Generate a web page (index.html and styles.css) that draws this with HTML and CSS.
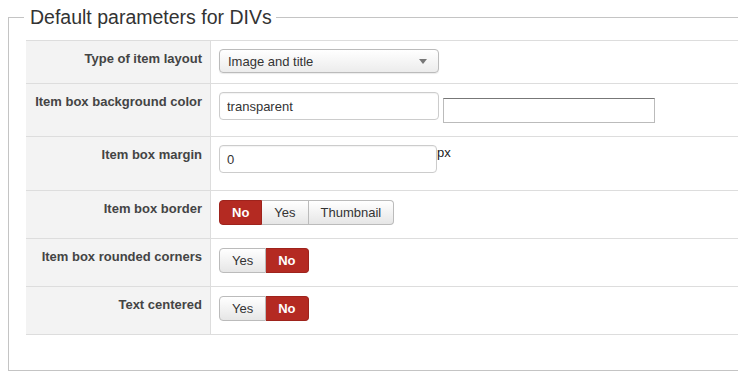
FILE: index.html
```html
<!DOCTYPE html>
<html lang="en">
<head>
    <meta charset="UTF-8">
    <meta name="viewport" content="width=device-width, initial-scale=1.0">
    <title>Default parameters for DIVs</title>
    <link rel="stylesheet" href="styles.css">
</head>
<body>
    <fieldset class="params">
        <legend>Default parameters for DIVs</legend>
        <table class="param-table">
            <!-- layout -->
            <tr class="row-select">
                <th>Type of item layout</th>
                <td>
                    <div class="select">
                        <span>Image and title</span>
                        <span class="caret"></span>
                    </div>
                </td>
            </tr>
            <!-- background -->
            <tr class="row-color">
                <th>Item box background color</th>
                <td>
                    <div class="inline">
                        <input class="text" type="text" value="transparent">
                        <span class="swatch"></span>
                    </div>
                </td>
            </tr>
            <!-- margin -->
            <tr class="row-input">
                <th>Item box margin</th>
                <td>
                    <div class="inline">
                        <input class="text short" type="text" value="0">
                        <span class="unit">px</span>
                    </div>
                </td>
            </tr>
            <!-- border -->
            <tr class="row-btn">
                <th>Item box border</th>
                <td>
                    <div class="btn-group">
                        <span class="btn active">No</span>
                        <span class="btn">Yes</span>
                        <span class="btn">Thumbnail</span>
                    </div>
                </td>
            </tr>
            <tr class="row-btn">
                <th>Item box rounded corners</th>
                <td>
                    <div class="btn-group">
                        <span class="btn">Yes</span>
                        <span class="btn active">No</span>
                    </div>
                </td>
            </tr>
            <tr class="row-btn">
                <th>Text centered</th>
                <td>
                    <div class="btn-group">
                        <span class="btn">Yes</span>
                        <span class="btn active">No</span>
                    </div>
                </td>
            </tr>
        </table>
    </fieldset>
</body>
</html>
```

FILE: styles.css
```css
body {
    margin: 0;
    font-family: "Liberation Sans", Arial, sans-serif;
    font-size: 13px;
    color: #333;
    background-color: #fff;
    overflow: hidden;
}
.params {
    margin: 5px -40px 0 8px;
    padding: 11px 0 35px 17px;
    border: 1px solid #c4c4c4;
    min-width: 0;
}
.params legend {
    margin-left: -2px;
    padding: 0 4px 0 6px;
    font-size: 19.5px;
    line-height: 24px;
    color: #333;
}
.param-table {
    width: 100%;
    border-collapse: collapse;
    border-top: 1px solid #ddd;
}
.param-table tr {
    border-bottom: 1px solid #ddd;
}
.param-table th {
    width: 176px;
    padding: 9px 8px 0 0;
    background-color: #f3f3f3;
    border-right: 1px solid #ddd;
    text-align: right;
    vertical-align: top;
    font-weight: bold;
    color: #444;
    line-height: 18px;
    white-space: nowrap;
}
.param-table td {
    padding: 8px 0 0 8px;
    vertical-align: top;
}
.row-select { height: 43px; }
.row-color { height: 53px; }
.row-input { height: 54px; }
.row-btn { height: 48px; }

.select {
    display: flex;
    align-items: center;
    justify-content: space-between;
    width: 220px;
    height: 24px;
    padding: 0 11px 0 8px;
    box-sizing: border-box;
    border: 1px solid #bbb;
    border-radius: 4px;
    background: linear-gradient(#fff, #ececec);
    box-shadow: 0 1px 1px rgba(0,0,0,0.08);
    color: #333;
}
.caret {
    width: 0;
    height: 0;
    border-left: 4px solid transparent;
    border-right: 4px solid transparent;
    border-top: 5px solid #777;
}
.inline {
    display: flex;
    align-items: flex-start;
}
.text {
    width: 220px;
    height: 28px;
    box-sizing: border-box;
    margin: 0;
    padding: 0 7px;
    border: 1px solid #ccc;
    border-radius: 4px;
    font-family: inherit;
    font-size: 13px;
    color: #333;
    box-shadow: inset 0 1px 1px rgba(0,0,0,0.05);
}
.text.short {
    width: 218px;
}
.swatch {
    display: block;
    width: 212px;
    height: 25px;
    box-sizing: border-box;
    margin: 6px 0 0 4px;
    border: 1px solid #bbb;
    border-top-color: #777;
    background-color: #fff;
}
.unit {
    line-height: 16px;
    color: #222;
}
.btn-group {
    display: inline-flex;
    margin-top: 1px;
}
.btn {
    display: block;
    height: 25px;
    padding: 0 12px;
    box-sizing: border-box;
    line-height: 23px;
    border: 1px solid #bbb;
    border-left-width: 0;
    background: linear-gradient(#fff, #e6e6e6);
    color: #333;
    font-size: 13px;
}
.btn:first-child {
    border-left-width: 1px;
    border-radius: 4px 0 0 4px;
}
.btn:last-child {
    border-radius: 0 4px 4px 0;
}
.btn.active {
    background: #b42a22;
    border-color: #9e231c;
    color: #fff;
    font-weight: bold;
}
```
